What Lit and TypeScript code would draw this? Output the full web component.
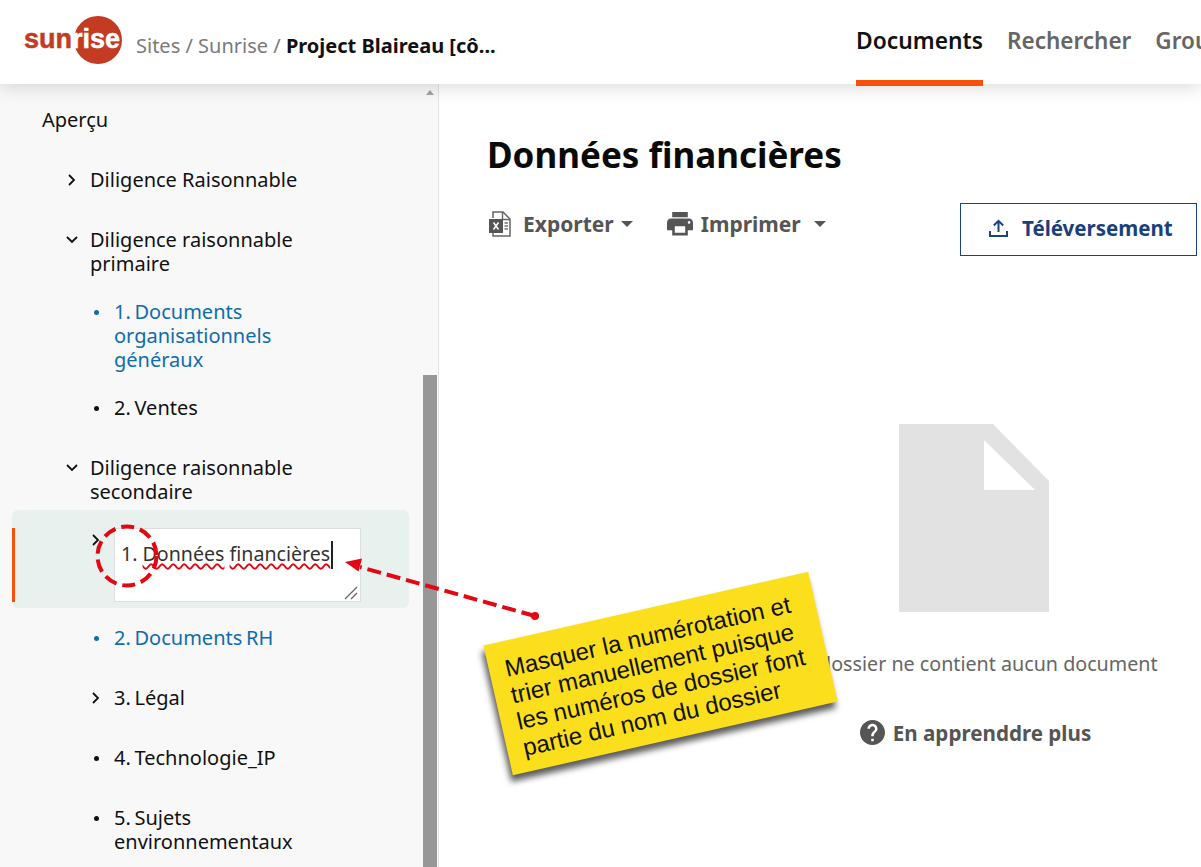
import { LitElement, html, css, svg } from 'lit';
import { customElement } from 'lit/decorators.js';
import { classMap } from 'lit/directives/class-map.js';

type Row = { label: string; level: number; marker?: 'open' | 'closed' | 'dot'; link?: boolean; tight?: boolean };

const rowsBefore: Row[] = [
  { label: 'Aperçu', level: 0 },
  { label: 'Diligence Raisonnable', level: 1, marker: 'closed' },
  { label: 'Diligence raisonnable primaire', level: 1, marker: 'open' },
  { label: '1. Documents organisationnels généraux', level: 2, marker: 'dot', link: true, tight: true },
  { label: '2. Ventes', level: 2, marker: 'dot', tight: true },
  { label: 'Diligence raisonnable secondaire', level: 1, marker: 'open' },
];

const rowsAfter: Row[] = [
  { label: '2. Documents RH', level: 2, marker: 'dot', link: true },
  { label: '3. Légal', level: 2, marker: 'closed' },
  { label: '4. Technologie_IP', level: 2, marker: 'dot' },
  { label: '5. Sujets environnementaux', level: 2, marker: 'dot' },
];

const chevronRight = svg`<path d="M3 1l5 5-5 5" fill="none" stroke="#111" stroke-width="1.8"/>`;
const chevronDown = svg`<path d="M1 3l5 5 5-5" fill="none" stroke="#111" stroke-width="1.8"/>`;

@customElement('app-root')
export class AppRoot extends LitElement {
  static override styles = css`
    :host {
      display: block;
      position: relative;
      width: 1201px;
      height: 867px;
      overflow: hidden;
      background: #fff;
      font-family: 'Noto Sans', sans-serif;
      font-size: 20px;
      line-height: 24px;
      color: #111;
    }

    .header {
      position: relative;
      z-index: 2;
      display: flex;
      height: 84px;
      background: #fff;
      box-shadow: 0 2px 18px rgba(0, 0, 0, 0.16);
    }
    .logo {
      position: relative;
      width: 98px;
      height: 48px;
      margin: 16px 0 0 24px;
      flex: none;
      font-family: 'Liberation Sans', sans-serif;
      font-weight: 700;
      font-size: 27px;
      line-height: 46px;
      color: #c23b22;
      -webkit-text-stroke: 0.5px currentColor;
    }
    .logo .sun {
      position: absolute;
      right: 0;
      top: 0;
      width: 48px;
      height: 48px;
      border-radius: 50%;
      background: #c23b22;
    }
    .logo .word {
      position: relative;
    }
    .logo .word b {
      color: #fff;
    }
    .crumbs {
      margin: 34px 0 0 14px;
      width: 720px;
      flex: none;
      color: #7a7a7a;
      white-space: nowrap;
    }
    .crumbs b {
      color: #111;
      font-weight: 700;
    }
    .nav {
      display: flex;
      gap: 24px;
      font-size: 22.5px;
      font-weight: 600;
      color: #666;
      white-space: nowrap;
    }
    .nav a {
      display: block;
      height: 86px;
      box-sizing: border-box;
      padding-top: 29px;
    }
    .nav a.active {
      font-size: 22.8px;
      color: #111;
      border-bottom: 6px solid #f9500a;
    }

    .body {
      display: flex;
      height: 783px;
    }
    .side {
      display: flex;
      width: 439px;
      flex: none;
      box-sizing: border-box;
      background: #f8f8f8;
      border-right: 1px solid #e2e2e2;
    }
    .tree {
      flex: 1;
      padding-top: 6px;
      overflow: hidden;
    }
    .row {
      display: flex;
      padding: 18px 0;
    }
    .row.tight {
      margin-top: -12px;
    }
    .row.l0 {
      padding-left: 42px;
    }
    .row.l1 {
      padding-left: 66px;
    }
    .row.l2 {
      padding-left: 90px;
      word-spacing: -1.5px;
    }
    .row.link {
      color: #0f6cad;
    }
    .mark {
      flex: none;
      width: 24px;
      height: 24px;
      display: flex;
      align-items: center;
    }
    .dot {
      width: 5px;
      height: 5px;
      margin-left: 4px;
      border-radius: 50%;
      background: currentColor;
    }
    .label {
      max-width: 222px;
    }
    .selected {
      position: relative;
      display: flex;
      margin: -12px 14px 0 12px;
      padding: 18px 0 6px 78px;
      border-radius: 6px;
      background: #e9f1ee;
    }
    .selected::before {
      content: '';
      position: absolute;
      left: 0;
      top: 18px;
      bottom: 6px;
      width: 3px;
      background: #f9500a;
    }
    .selected .mark {
      height: 24px;
    }
    .edit {
      position: relative;
      width: 247px;
      height: 74px;
      box-sizing: border-box;
      padding: 12px 6px;
      background: #fff;
      border: 1px solid #dddddd;
      color: #333;
      font-size: 19.6px;
      white-space: nowrap;
    }
    .edit u {
      text-decoration: underline wavy #e30613 1.5px;
      text-underline-offset: 2px;
    }
    .caret {
      display: inline-block;
      width: 2px;
      height: 28px;
      margin-left: 1px;
      vertical-align: -8px;
      background: #222;
    }
    .grip {
      position: absolute;
      right: 2px;
      bottom: 1px;
    }
    .bar {
      display: flex;
      flex-direction: column;
      width: 15px;
      flex: none;
    }
    .bar .up {
      width: 0;
      height: 0;
      margin: 6px 0 0 3px;
      border: 4px solid transparent;
      border-top: 0;
      border-bottom: 5px solid #a3a3a3;
    }
    .bar .thumb {
      margin-top: auto;
      height: 492px;
      width: 14px;
      background: #979797;
    }

    .main {
      flex: 1;
      padding-left: 48px;
      overflow: hidden;
    }
    h1 {
      margin: 49px 0 0;
      font-size: 35px;
      line-height: 44px;
      font-weight: 700;
      color: #0a0a0a;
      white-space: nowrap;
    }
    .tools {
      display: flex;
      align-items: flex-start;
      width: 710px;
      margin-top: 26px;
      color: #555;
      font-size: 21px;
      font-weight: 700;
    }
    .tool {
      display: flex;
      align-items: center;
      height: 42px;
      margin-right: 34px;
    }
    .tool svg {
      flex: none;
      margin-right: 8px;
    }
    .tool.xls {
      padding-left: 2px;
    }
    .tool.xls svg {
      margin-right: 12px;
    }
    .drop {
      width: 0;
      height: 0;
      margin-left: 7px;
      border: 6.5px solid transparent;
      border-top: 6.5px solid #555;
      border-bottom: 0;
    }
    .drop.wide {
      margin-left: 13px;
    }
    .upload {
      display: flex;
      align-items: center;
      gap: 14px;
      width: 237px;
      height: 53px;
      margin-left: auto;
      box-sizing: border-box;
      padding: 0 0 3px 28px;
      border: 1.5px solid #1a4480;
      color: #1a3f7d;
      font-size: 20.5px;
      font-weight: 700;
    }
    .empty {
      display: flex;
      flex-direction: column;
      align-items: center;
      width: 974px;
      margin-top: 168px;
    }
    .empty p {
      margin: 40px 0 0;
      color: #666;
      font-size: 19.7px;
      white-space: nowrap;
    }
    .help {
      display: flex;
      align-items: center;
      gap: 8px;
      margin: 44px 0 0 3px;
      color: #555;
      font-size: 20.6px;
      font-weight: 700;
    }

    .marks {
      position: absolute;
      left: 0;
      top: 0;
      z-index: 3;
      pointer-events: none;
    }
    .note {
      position: absolute;
      z-index: 4;
      left: 494px;
      top: 607px;
      width: 333px;
      height: 133px;
      box-sizing: border-box;
      padding: 14px 0 0 16px;
      transform: rotate(-12.8deg);
      background: #fbdf1d;
      box-shadow: -3px 6px 6px rgba(0, 0, 0, 0.65);
      font-family: 'Liberation Sans', sans-serif;
      font-size: 24px;
      line-height: 27px;
      color: #111;
      white-space: nowrap;
    }
  `;

  private row(r: Row) {
    const classes = { row: true, [`l${r.level}`]: true, link: !!r.link, tight: !!r.tight };
    return html`<div class=${classMap(classes)}>
      ${r.marker ? html`<span class="mark">${this.marker(r.marker)}</span>` : ''}
      <span class="label">${r.label}</span>
    </div>`;
  }

  private marker(kind: string) {
    if (kind === 'dot') return html`<span class="dot"></span>`;
    if (kind === 'open') return html`<svg width="12" height="12" viewBox="0 0 12 12">${chevronDown}</svg>`;
    return html`<svg width="12" height="12" viewBox="0 0 12 12">${chevronRight}</svg>`;
  }

  override render() {
    return html`
      <div class="header">
        <div class="logo">
          <span class="sun"></span>
          <span class="word">sun<b>rise</b></span>
        </div>
        <div class="crumbs">Sites / Sunrise / <b>Project Blaireau [cô...</b></div>
        <div class="nav">
          <a class="active">Documents</a>
          <a>Rechercher</a>
          <a>Groupes</a>
        </div>
      </div>
      <div class="body">
        <div class="side">
          <div class="tree">
            ${rowsBefore.map((r) => this.row(r))}
            <div class="selected">
              <span class="mark"><svg width="12" height="12" viewBox="0 0 12 12">${chevronRight}</svg></span>
              <div class="edit">
                1. <u>Données</u> <u>financières</u><span class="caret"></span>
                <svg class="grip" width="14" height="14" viewBox="0 0 14 14">
                  <path d="M1 13L13 1M7 13l6-6" stroke="#666" stroke-width="1.3" fill="none" />
                </svg>
              </div>
            </div>
            ${rowsAfter.map((r) => this.row(r))}
          </div>
          <div class="bar"><span class="up"></span><span class="thumb"></span></div>
        </div>
        <div class="main">
          <h1>Données financières</h1>
          <div class="tools">
            <div class="tool xls">
              <svg width="22" height="26" viewBox="0 0 22 26">
                <path d="M4 7V1h10l7 7v17H4v-3" fill="#fff" stroke="#666" stroke-width="1.5" />
                <path d="M13.500 1v7.500H21" fill="none" stroke="#666" stroke-width="1.4" />
                <rect x="0" y="8" width="14" height="14" fill="#555" />
                <path d="M4.500 11.500l5 7M9.500 11.500l-5 7" stroke="#fff" stroke-width="1.5" />
                <path d="M15.500 12h3.500M15.500 15h3.500M15.500 18h3.500" stroke="#777" stroke-width="1.3" />
              </svg>
              Exporter<span class="drop"></span>
            </div>
            <div class="tool">
              <svg width="26" height="23.4" viewBox="2 3 20 18">
                <path
                  fill="#555"
                  d="M19 8H5c-1.66 0-3 1.34-3 3v6h4v4h12v-4h4v-6c0-1.66-1.34-3-3-3zm-3 11H8v-5h8v5zm3-7c-.55 0-1-.45-1-1s.45-1 1-1 1 .45 1 1-.45 1-1 1zm-1-9H6v4h12V3z"
                />
              </svg>
              Imprimer<span class="drop wide"></span>
            </div>
            <div class="upload">
              <svg width="19" height="18" viewBox="0 0 19 18">
                <path d="M9.500 13V2M4.800 6.500l4.700-4.700 4.700 4.700M1 12v5h17v-5" fill="none" stroke="#1a4480" stroke-width="2" />
              </svg>
              Téléversement
            </div>
          </div>
          <div class="empty">
            <svg width="150" height="188" viewBox="0 0 150 188">
              <path d="M0 0H94L150 57V188H0z" fill="#e2e2e2" />
              <path d="M85 16V66H136z" fill="#fff" />
            </svg>
            <p>Ce dossier ne contient aucun document</p>
            <div class="help">
              <svg width="25" height="25" viewBox="2 2 20 20">
                <path
                  fill="#555"
                  d="M12 2C6.48 2 2 6.48 2 12s4.48 10 10 10 10-4.48 10-10S17.52 2 12 2zm1 17h-2v-2h2v2zm2.07-7.75l-.9.92C13.45 12.9 13 13.5 13 15h-2v-.5c0-1.1.45-2.1 1.17-2.83l1.24-1.26c.37-.36.59-.86.59-1.41 0-1.1-.9-2-2-2s-2 .9-2 2H8c0-2.21 1.79-4 4-4s4 1.79 4 4c0 .88-.36 1.68-.93 2.25z"
                />
              </svg>
              En apprenddre plus
            </div>
          </div>
        </div>
      </div>
      <svg class="marks" width="1201" height="867" viewBox="0 0 1201 867">
        <circle cx="127" cy="556" r="29.5" fill="none" stroke="#e30613" stroke-width="4" stroke-dasharray="13 6" />
        <path d="M535 616L360 567" fill="none" stroke="#e30613" stroke-width="4" stroke-dasharray="14 6" />
        <path d="M345 562l17-3.500-3.500 13z" fill="#e30613" />
        <circle cx="535" cy="616" r="4" fill="#e30613" />
      </svg>
      <div class="note">
        Masquer la numérotation et<br />
        trier manuellement puisque<br />
        les numéros de dossier font<br />
        partie du nom du dossier
      </div>
    `;
  }
}
